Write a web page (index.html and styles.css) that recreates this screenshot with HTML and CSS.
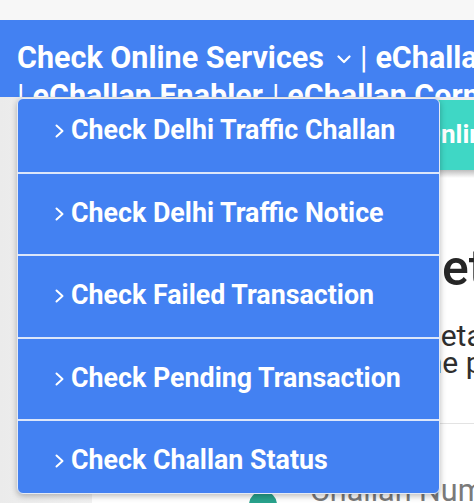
FILE: index.html
```html
<!DOCTYPE html>
<html lang="en">
<head>
<meta charset="utf-8">
<title>Check Online Services</title>
<link rel="stylesheet" href="styles.css">
</head>
<body>
<div class="topband"></div>
<header class="nav">
  <div class="nav-line">Check Online Services<svg class="nav-chev" viewBox="0 0 14 9" width="14" height="9"><polyline points="1.5,1.5 7,7 12.5,1.5" fill="none" stroke="#fff" stroke-width="2.2" stroke-linecap="round" stroke-linejoin="round"/></svg><span class="sep">|</span>eChallan</div>
  <div class="nav-line"><span class="sep sep-first">|</span>eChallan Enabler<span class="sep">|</span>eChallan Corner</div>
</header>
<div class="page">
  <aside class="gutter"></aside>
  <main class="card">
    <div class="cta"><span class="cta-text">Online Services</span></div>
    <div class="cta-shadow"></div>
    <h1 class="title">Get Details</h1>
    <p class="desc"><span class="desc-l1">Details of your</span><span class="desc-l2">the payment</span></p>
    <hr class="rule">
    <div class="field"><span class="dot"></span><span class="field-label">Challan Number</span></div>
  </main>
</div>
<nav class="menu">
  <ul class="menu-list">
    <li class="menu-item"><svg class="chev" viewBox="0 0 9 14" width="9" height="14"><polyline points="1.5,1.5 7.5,7 1.5,12.5" fill="none" stroke="#fff" stroke-width="2" stroke-linecap="round" stroke-linejoin="round"/></svg><span>Check Delhi Traffic Challan</span></li>
    <li class="menu-item"><svg class="chev" viewBox="0 0 9 14" width="9" height="14"><polyline points="1.5,1.5 7.5,7 1.5,12.5" fill="none" stroke="#fff" stroke-width="2" stroke-linecap="round" stroke-linejoin="round"/></svg><span>Check Delhi Traffic Notice</span></li>
    <li class="menu-item"><svg class="chev" viewBox="0 0 9 14" width="9" height="14"><polyline points="1.5,1.5 7.5,7 1.5,12.5" fill="none" stroke="#fff" stroke-width="2" stroke-linecap="round" stroke-linejoin="round"/></svg><span>Check Failed Transaction</span></li>
    <li class="menu-item"><svg class="chev" viewBox="0 0 9 14" width="9" height="14"><polyline points="1.5,1.5 7.5,7 1.5,12.5" fill="none" stroke="#fff" stroke-width="2" stroke-linecap="round" stroke-linejoin="round"/></svg><span>Check Pending Transaction</span></li>
    <li class="menu-item"><svg class="chev" viewBox="0 0 9 14" width="9" height="14"><polyline points="1.5,1.5 7.5,7 1.5,12.5" fill="none" stroke="#fff" stroke-width="2" stroke-linecap="round" stroke-linejoin="round"/></svg><span>Check Challan Status</span></li>
  </ul>
</nav>
</body>
</html>
```

FILE: styles.css
```css
* { box-sizing: border-box; }

html, body {
  margin: 0;
  padding: 0;
}

body {
  width: 474px;
  height: 503px;
  overflow: hidden;
  position: relative;
  background: #eeeeee;
  font-family: Roboto, "Noto Sans", "Liberation Sans", sans-serif;
}

.topband {
  height: 20px;
  background: #f7f7f7;
}

.nav {
  height: 77px;
  overflow: hidden;
  background: #4381f2;
  color: #fff;
  padding: 19px 0 0 17px;
  font-size: 30.5px;
  font-weight: 700;
  line-height: 38px;
}

.nav-line {
  white-space: nowrap;
  display: flex;
  align-items: center;
}

.nav-chev {
  margin: 2px 0 0 13px;
  flex: none;
}

.sep {
  font-weight: 400;
  margin: 0 8px 0 9px;
}

.sep-first {
  margin-left: 0;
}

.page {
  display: flex;
  height: 406px;
}

.gutter {
  width: 92px;
  flex: none;
  background: linear-gradient(to right, #ebebeb, #f1f1f1);
}

.card {
  flex: 1;
  margin-top: 3px;
  background: #fff;
  overflow: hidden;
  white-space: nowrap;
}

.cta {
  height: 70px;
  background: #3fd7c5;
  color: #fff;
  font-size: 26px;
  font-weight: 700;
  line-height: 68px;
  padding-left: 331px;
}

.cta-shadow {
  height: 8px;
  background: linear-gradient(to bottom, #bdbdbd, #ececec 70%, #fff);
}

.title {
  margin: 60px 0 0 0;
  padding-left: 316px;
  font-size: 50px;
  font-weight: 500;
  line-height: 60px;
  color: #262626;
}

.desc {
  margin: 24px 0 0 0;
  font-size: 30px;
  line-height: 27px;
  color: #2e2e2e;
}

.desc-l1, .desc-l2 {
  display: block;
}

.desc-l1 { padding-left: 329px; }
.desc-l2 { padding-left: 324px; }

.rule {
  margin: 47px 0 0 0;
  border: 0;
  border-top: 1px solid #e3e3e3;
}

.field {
  display: flex;
  align-items: flex-start;
  padding: 50px 0 0 157px;
  gap: 33px;
}

.dot {
  width: 28px;
  height: 28px;
  margin-top: 17px;
  border-radius: 50%;
  background: #28a28c;
  flex: none;
}

.field-label {
  font-size: 30.5px;
  line-height: 34px;
  color: #7a7a7a;
}

.menu {
  position: absolute;
  left: 17px;
  top: 98px;
  width: 423px;
  height: 396px;
  background: #4381f2;
  border: 1px solid #e4eaf5;
  border-radius: 6px;
  box-shadow: 0 2px 6px rgba(0, 0, 0, 0.28);
  overflow: hidden;
}

.menu-list {
  list-style: none;
  margin: -10px 0 0 0;
  padding: 0;
}

.menu-item {
  height: 82.5px;
  display: flex;
  align-items: flex-start;
  padding: 24px 0 0 37px;
  gap: 7px;
  color: #fff;
  font-size: 26.8px;
  font-weight: 700;
  line-height: 30px;
  white-space: nowrap;
}

.menu-item:first-child {
  padding-top: 26px;
}

.menu-item + .menu-item {
  border-top: 2px solid #dce6fa;
}

.chev {
  margin-top: 9px;
  flex: none;
}
```
